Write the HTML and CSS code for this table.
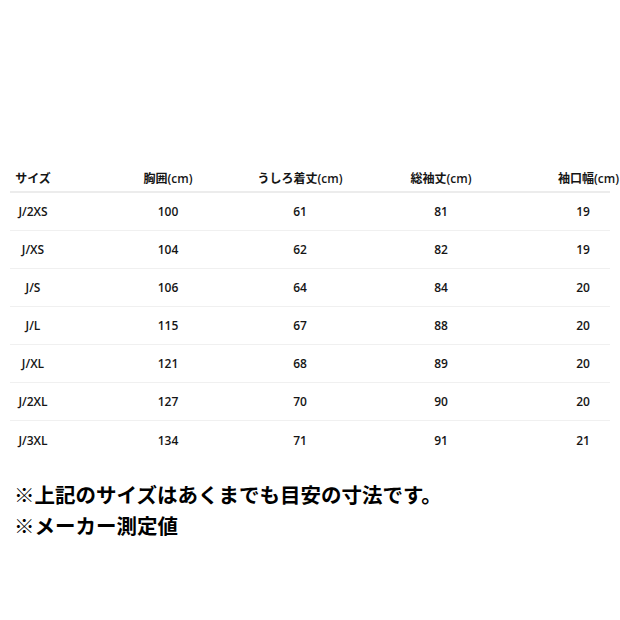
FILE: index.html
```html
<!DOCTYPE html>
<html lang="ja">
<head>
<meta charset="utf-8">
<link rel="stylesheet" href="styles.css">
</head>
<body>
<div class="page">
  <div class="table">
    <div class="row head">
      <div class="cell c1">サイズ</div>
      <div class="cell c2">胸囲(cm)</div>
      <div class="cell c3">うしろ着丈(cm)</div>
      <div class="cell c4">総袖丈(cm)</div>
      <div class="cell c5">袖口幅(cm)</div>
    </div>
    <div class="row">
      <div class="cell c1">J/2XS</div><div class="cell c2">100</div><div class="cell c3">61</div><div class="cell c4">81</div><div class="cell c5">19</div>
    </div>
    <div class="row">
      <div class="cell c1">J/XS</div><div class="cell c2">104</div><div class="cell c3">62</div><div class="cell c4">82</div><div class="cell c5">19</div>
    </div>
    <div class="row">
      <div class="cell c1">J/S</div><div class="cell c2">106</div><div class="cell c3">64</div><div class="cell c4">84</div><div class="cell c5">20</div>
    </div>
    <div class="row">
      <div class="cell c1">J/L</div><div class="cell c2">115</div><div class="cell c3">67</div><div class="cell c4">88</div><div class="cell c5">20</div>
    </div>
    <div class="row">
      <div class="cell c1">J/XL</div><div class="cell c2">121</div><div class="cell c3">68</div><div class="cell c4">89</div><div class="cell c5">20</div>
    </div>
    <div class="row">
      <div class="cell c1">J/2XL</div><div class="cell c2">127</div><div class="cell c3">70</div><div class="cell c4">90</div><div class="cell c5">20</div>
    </div>
    <div class="row last">
      <div class="cell c1">J/3XL</div><div class="cell c2">134</div><div class="cell c3">71</div><div class="cell c4">91</div><div class="cell c5">21</div>
    </div>
  </div>
  <div class="notes">
    <p>※上記のサイズはあくまでも目安の寸法です。</p>
    <p>※メーカー測定値</p>
  </div>
</div>
</body>
</html>
```
FILE: styles.css
```css
* { box-sizing: border-box; }
html, body { margin: 0; padding: 0; background: #fff; }
.page {
  width: 620px;
  height: 620px;
  padding: 165px 10px 0 10px;
  font-family: "Open Sans", "Noto Sans CJK JP", sans-serif;
  color: #151515;
}
.table { display: flex; flex-direction: column; }
.row {
  display: grid;
  grid-template-columns: 46px 152px 142px 141px 119px;
  height: 38px;
  align-items: center;
  border-bottom: 1px solid #f0f0f0;
  font-size: 12px;
  font-weight: 600;
}
.row.head {
  height: 28px;
  border-bottom: 2px solid #ececec;
}
.row.last { border-bottom: none; }
.cell { text-align: center; white-space: nowrap; }
.c2 { padding-left: 72px; }
.c3 { padding-left: 42px; }
.c4 { padding-left: 41px; }
.c5 { padding-left: 67px; padding-right: 2px; }
.notes {
  margin-top: 20px;
  padding-left: 4px;
  font-family: "Noto Sans CJK JP", sans-serif;
  font-weight: 700;
  font-size: 20.5px;
  line-height: 31px;
  color: #000;
}
.notes p { margin: 0; }
```
